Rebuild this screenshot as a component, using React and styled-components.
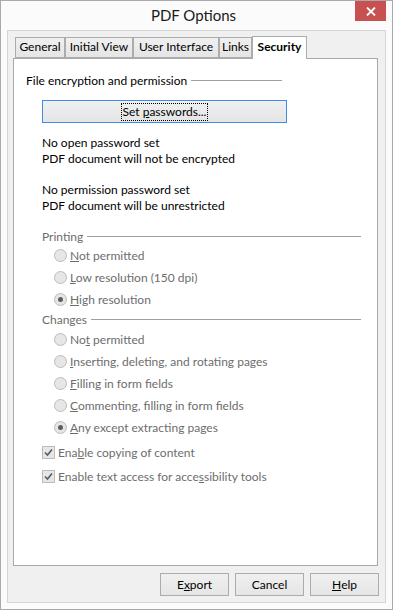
import * as React from "react";
import styled, { createGlobalStyle } from "styled-components";

const GlobalStyle = createGlobalStyle`
  html, body {
    margin: 0;
    padding: 0;
    background: #ffffff;
  }
  body {
    font-family: Lato, "Noto Sans", sans-serif;
    font-size: 12px;
    color: #000;
  }
`;

const tabs = [
  { label: "General", width: 50 },
  { label: "Initial View", width: 68 },
  { label: "User Interface", width: 86 },
  { label: "Links", width: 33 },
  { label: "Security", width: 55, active: true },
];

const printing = [
  { before: "", key: "N", after: "ot permitted", checked: false },
  { before: "", key: "L", after: "ow resolution (150 dpi)", checked: false },
  { before: "", key: "H", after: "igh resolution", checked: true },
];

const changes = [
  { before: "No", key: "t", after: " permitted", checked: false },
  { before: "", key: "I", after: "nserting, deleting, and rotating pages", checked: false },
  { before: "", key: "F", after: "illing in form fields", checked: false },
  { before: "", key: "C", after: "ommenting, filling in form fields", checked: false },
  { before: "", key: "A", after: "ny except extracting pages", checked: true },
];

const Check = () => (
  <svg width="9" height="9" viewBox="0 0 9 9">
    <path d="M1 4.5 L3.5 7 L8 1.5" stroke="#5a5a5a" strokeWidth="1.6" fill="none" />
  </svg>
);

const App = () => {
  return (
    <>
      <GlobalStyle />
      <Window>
        <TitleBar>
          <span />
          <Title>PDF Options</Title>
          <CloseButton>
            <svg width="10" height="9" viewBox="0 0 10 9">
              <path d="M1 0.5 L9 8.5 M9 0.5 L1 8.5" stroke="#fff" strokeWidth="1.8" />
            </svg>
          </CloseButton>
        </TitleBar>
        <Client>
          <TabStrip>
            {tabs.map((t) => (
              <Tab key={t.label} $active={t.active} $width={t.width}>{t.label}</Tab>
            ))}
          </TabStrip>
          <Panel>
            <Heading $indent={12} $lineEnd={95}>File encryption and permission</Heading>
            <PasswordButton>
              <FocusLabel>Set <u>p</u>asswords...</FocusLabel>
            </PasswordButton>
            <InfoText $top={12}>
              No open password set
              <br />
              PDF document will not be encrypted
            </InfoText>
            <InfoText $top={15}>
              No permission password set
              <br />
              PDF document will be unrestricted
            </InfoText>
            <Heading $indent={28} $lineEnd={16} $disabled $top={14}>Printing</Heading>
            {printing.map((o) => (
              <OptionRow key={o.after}>
                <Radio $checked={o.checked} />
                <span>{o.before}<u>{o.key}</u>{o.after}</span>
              </OptionRow>
            ))}
            <Heading $indent={28} $lineEnd={16} $disabled $top={0} $height={18}>Changes</Heading>
            {changes.map((o) => (
              <OptionRow key={o.after}>
                <Radio $checked={o.checked} />
                <span>{o.before}<u>{o.key}</u>{o.after}</span>
              </OptionRow>
            ))}
            <CheckRow $top={2}>
              <CheckBox><Check /></CheckBox>
              <span>Ena<u>b</u>le copying of content</span>
            </CheckRow>
            <CheckRow>
              <CheckBox><Check /></CheckBox>
              <span>Enable text access for acce<u>s</u>sibility tools</span>
            </CheckRow>
          </Panel>
          <ButtonRow>
            <DialogButton>E<u>x</u>port</DialogButton>
            <DialogButton>Cancel</DialogButton>
            <DialogButton><u>H</u>elp</DialogButton>
          </ButtonRow>
        </Client>
      </Window>
    </>
  );
};

const Window = styled.div`
  width: 393px;
  height: 610px;
  box-sizing: border-box;
  border: 1px solid #aaaaaa;
  background: #fbfbfb;
  padding: 0 6px 6px 6px;
  display: flex;
  flex-direction: column;
`;

const TitleBar = styled.div`
  height: 29px;
  display: grid;
  grid-template-columns: 1fr auto 1fr;
  align-items: center;
  margin: 0 -6px;
  padding-right: 6px;
`;

const Title = styled.div`
  font-size: 15px;
  color: #1a1a1a;
  padding-bottom: 1px;
`;

const CloseButton = styled.div`
  justify-self: end;
  align-self: start;
  width: 31px;
  height: 20px;
  background: #c75050;
  display: flex;
  align-items: center;
  justify-content: center;
`;

const Client = styled.div`
  flex: 1;
  border: 1px solid #d6d6d6;
  background: #f0f0f0;
  display: flex;
  flex-direction: column;
  padding: 5px 7px 6px 5px;
`;

const TabStrip = styled.div`
  display: flex;
  align-items: flex-end;
  padding-left: 2px;
  height: 22px;
  position: relative;
  z-index: 1;
`;

const Tab = styled.div`
  box-sizing: border-box;
  width: ${(p) => p.$width}px;
  height: ${(p) => (p.$active ? "23px" : "21px")};
  margin-bottom: ${(p) => (p.$active ? "-1px" : "0")};
  border: 1px solid #acacac;
  border-bottom: ${(p) => (p.$active ? "none" : "1px solid #acacac")};
  background: ${(p) => (p.$active ? "#ffffff" : "linear-gradient(#f0f0f0, #e5e5e5)")};
  font-weight: ${(p) => (p.$active ? "bold" : "normal")};
  line-height: ${(p) => (p.$active ? "19px" : "18px")};
  text-align: center;
  white-space: nowrap;
`;

const Panel = styled.div`
  flex: 1;
  background: #ffffff;
  border: 1px solid #a9a9a9;
  display: flex;
  flex-direction: column;
`;

const Heading = styled.div`
  display: flex;
  align-items: center;
  gap: 4px;
  height: ${(p) => p.$height || 16}px;
  margin-top: ${(p) => (p.$top !== undefined ? p.$top : 13)}px;
  padding-left: ${(p) => p.$indent}px;
  padding-right: ${(p) => p.$lineEnd}px;
  color: ${(p) => (p.$disabled ? "#6d6d6d" : "#000")};
  white-space: nowrap;

  &::after {
    content: "";
    flex: 1;
    height: 1px;
    background: #a0a0a0;
  }
`;

const PasswordButton = styled.div`
  margin: 12px 0 0 28px;
  width: 245px;
  height: 23px;
  box-sizing: border-box;
  border: 1px solid #3c8fe2;
  background: linear-gradient(#f0f0f0, #e5e5e5);
  display: flex;
  align-items: center;
  justify-content: center;
`;

const FocusLabel = styled.span`
  outline: 1px dotted #000;
  padding: 0 1px;
  line-height: 16px;
`;

const InfoText = styled.div`
  margin: ${(p) => p.$top}px 0 0 28px;
  line-height: 16px;
`;

const OptionRow = styled.div`
  display: flex;
  align-items: center;
  gap: 3px;
  height: 22px;
  padding-left: 40px;
  color: #6d6d6d;
`;

const Radio = styled.span`
  width: 11px;
  height: 11px;
  border-radius: 50%;
  border: 1px solid #bcbcbc;
  background: #e6e6e6;
  display: flex;
  align-items: center;
  justify-content: center;

  &::after {
    content: "";
    width: 5px;
    height: 5px;
    border-radius: 50%;
    background: #5e5e5e;
    display: ${(p) => (p.$checked ? "block" : "none")};
  }
`;

const CheckRow = styled.div`
  display: flex;
  align-items: center;
  gap: 3px;
  height: 24px;
  margin-top: ${(p) => p.$top || 0}px;
  padding-left: 28px;
  color: #6d6d6d;
`;

const CheckBox = styled.span`
  width: 11px;
  height: 11px;
  border: 1px solid #bcbcbc;
  background: #e6e6e6;
  display: flex;
  align-items: center;
  justify-content: center;
`;

const ButtonRow = styled.div`
  display: flex;
  justify-content: flex-end;
  gap: 6px;
  margin-top: 7px;
  margin-right: -1px;
`;

const DialogButton = styled.div`
  width: 69px;
  height: 23px;
  box-sizing: border-box;
  border: 1px solid #acacac;
  background: linear-gradient(#f0f0f0, #e5e5e5);
  display: flex;
  align-items: center;
  justify-content: center;
`;

export default App;
